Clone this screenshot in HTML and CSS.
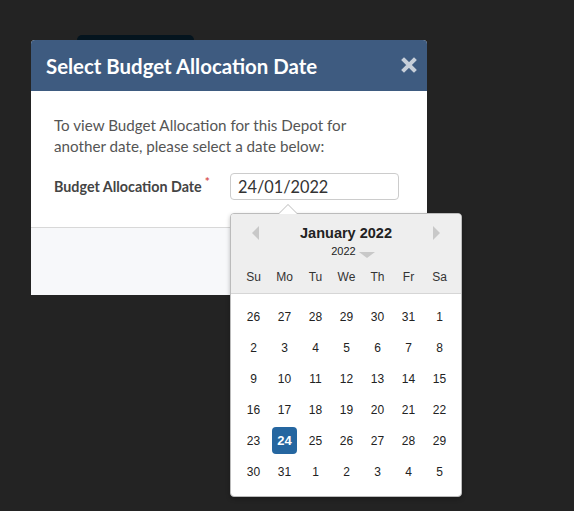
FILE: index.html
```html
<!DOCTYPE html>
<html>
<head>
<meta charset="utf-8">
<link rel="stylesheet" href="styles.css">
</head>
<body>
<div class="page">
  <div class="behind"></div>
</div>
<div class="modal">
  <div class="modal-header">
    <h2 class="modal-title">Select Budget Allocation Date</h2>
    <span class="close">
      <svg width="16" height="16" viewBox="0 0 16 16"><path d="M3 3 L13 13 M13 3 L3 13" stroke="#c7cfd9" stroke-width="4" stroke-linecap="square"/></svg>
    </span>
  </div>
  <div class="modal-body">
    <p class="intro">To view Budget Allocation for this Depot for another date, please select a date below:</p>
    <div class="field">
      <label class="label">Budget Allocation Date<span class="req">*</span></label>
      <div class="input-wrap">
        <div class="input">24/01/2022</div>
        <div class="datepicker">
          <div class="dp-caret"></div>
          <div class="dp-head">
            <div class="dp-nav">
              <span class="arrow-left"></span>
              <span class="dp-month">January 2022</span>
              <span class="arrow-right"></span>
            </div>
            <div class="dp-year">2022 <span class="arrow-down"></span></div>
            <div class="dp-grid dp-dow">
              <span>Su</span><span>Mo</span><span>Tu</span><span>We</span><span>Th</span><span>Fr</span><span>Sa</span>
            </div>
          </div>
          <div class="dp-grid dp-days">
            <span>26</span><span>27</span><span>28</span><span>29</span><span>30</span><span>31</span><span>1</span>
            <span>2</span><span>3</span><span>4</span><span>5</span><span>6</span><span>7</span><span>8</span>
            <span>9</span><span>10</span><span>11</span><span>12</span><span>13</span><span>14</span><span>15</span>
            <span>16</span><span>17</span><span>18</span><span>19</span><span>20</span><span>21</span><span>22</span>
            <span>23</span><span class="sel">24</span><span>25</span><span>26</span><span>27</span><span>28</span><span>29</span>
            <span>30</span><span>31</span><span>1</span><span>2</span><span>3</span><span>4</span><span>5</span>
          </div>
        </div>
      </div>
    </div>
  </div>
  <div class="modal-footer"></div>
</div>
</body>
</html>
```
FILE: styles.css
```css
html, body {
  margin: 0;
  padding: 0;
  background: #232323;
  height: 100%;
}
body {
  font-family: Lato, "Liberation Sans", sans-serif;
  position: relative;
  overflow: hidden;
}
.page {
  padding-top: 35px;
  padding-left: 77px;
}
.behind {
  width: 117px;
  height: 10px;
  background: #04141e;
  border-radius: 5px 5px 0 0;
}
.modal {
  position: absolute;
  left: 31px;
  top: 40px;
  width: 396px;
  border-radius: 4px 4px 0 0;
  background: #fff;
}
.modal-header {
  height: 51px;
  background: #3e5b80;
  border-radius: 4px 4px 0 0;
  display: flex;
  align-items: center;
  justify-content: space-between;
  padding: 0 10px 0 15px;
  box-sizing: border-box;
}
.modal-title {
  margin: 0;
  color: #fff;
  font-size: 20.4px;
  font-weight: 700;
}
.close {
  display: flex;
  margin-top: -2px;
}
.modal-body {
  padding: 24px 23px 0 23px;
  height: 137px;
  box-sizing: border-box;
  border-bottom: 1px solid #d8d8d8;
}
.intro {
  margin: 0;
  font-size: 15.2px;
  line-height: 21px;
  color: #555;
  max-width: 320px;
}
.field {
  display: flex;
  align-items: center;
  margin-top: 16px;
}
.label {
  width: 176px;
  font-size: 14.3px;
  font-weight: 700;
  color: #444;
  margin-top: -4px;
}
.req {
  color: #d9534f;
  font-size: 12px;
  vertical-align: 6px;
  margin-left: 3px;
}
.input-wrap {
  position: relative;
}
.input {
  width: 169px;
  height: 27px;
  box-sizing: border-box;
  border: 1px solid #ccc;
  border-radius: 4px;
  padding: 3px 7px;
  font-size: 16.3px;
  color: #333;
  line-height: 20px;
}
.modal-footer {
  height: 67px;
  background: #f7f8fa;
}
.datepicker {
  position: absolute;
  left: 0;
  top: 40px;
  width: 232px;
  box-sizing: border-box;
  border: 1px solid #bbb;
  border-radius: 4px;
  background: #fff;
  box-shadow: 0 2px 4px rgba(0,0,0,0.25);
  font-family: "Liberation Sans", Arial, sans-serif;
  color: #222;
  z-index: 5;
  padding-bottom: 9px;
}
.dp-caret {
  position: absolute;
  top: -10px;
  left: 47px;
  width: 0;
  height: 0;
  border-left: 10px solid transparent;
  border-right: 10px solid transparent;
  border-bottom: 10px solid #bbb;
}
.dp-caret::after {
  content: "";
  position: absolute;
  left: -9px;
  top: 1px;
  border-left: 9px solid transparent;
  border-right: 9px solid transparent;
  border-bottom: 9px solid #fff;
}
.dp-head {
  background: #eeeeee;
  border-radius: 3px 3px 0 0;
  border-bottom: 1px solid #d6d6d6;
  padding: 10px 7px 0 7px;
}
.dp-nav {
  display: flex;
  align-items: center;
  justify-content: space-between;
  padding: 0 14px 0 14px;
  height: 18px;
}
.dp-month {
  font-weight: 700;
  font-size: 14.5px;
  color: #222;
}
.arrow-left {
  width: 0; height: 0;
  border-top: 7px solid transparent;
  border-bottom: 7px solid transparent;
  border-right: 7px solid #c8c8c8;
}
.arrow-right {
  width: 0; height: 0;
  border-top: 7px solid transparent;
  border-bottom: 7px solid transparent;
  border-left: 7px solid #c8c8c8;
}
.dp-year {
  text-align: center;
  font-size: 11px;
  margin-top: 1px;
  height: 16px;
  line-height: 16px;
  padding-left: 14px;
}
.arrow-down {
  display: inline-block;
  width: 0; height: 0;
  border-left: 8px solid transparent;
  border-right: 8px solid transparent;
  border-top: 6px solid #c8c8c8;
  vertical-align: -3px;
}
.dp-grid {
  display: grid;
  grid-template-columns: repeat(7, 31px);
}
.dp-grid span {
  text-align: center;
}
.dp-dow {
  height: 33px;
  align-items: center;
  font-size: 12px;
  color: #333;
  margin-top: 1px;
}
.dp-days {
  padding: 7px 7px 0 7px;
  grid-auto-rows: 31px;
  font-size: 12px;
  color: #222;
}
.dp-days span {
  display: flex;
  align-items: center;
  justify-content: center;
}
.dp-days .sel {
  background: #2566a0;
  color: #fff;
  font-weight: 700;
  font-size: 13px;
  border-radius: 4px;
  margin: 2px 3px;
}
```
